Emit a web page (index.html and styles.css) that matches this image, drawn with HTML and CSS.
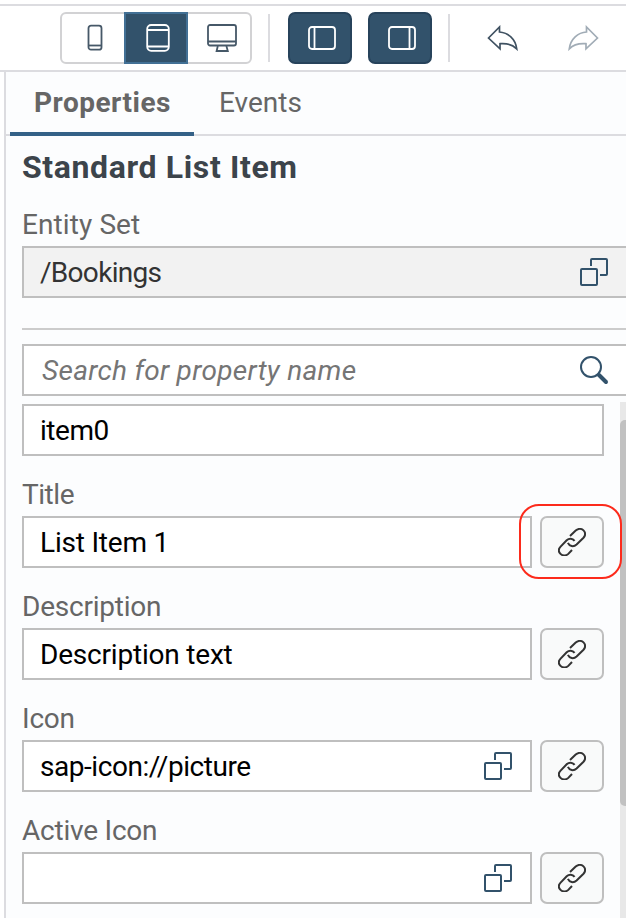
FILE: index.html
```html
<!DOCTYPE html>
<html lang="en">
<head>
<meta charset="utf-8">
<title>Properties</title>
<link rel="stylesheet" href="styles.css">
</head>
<body>
<svg width="0" height="0" class="defs">
  <symbol id="link" viewBox="0 0 28 28"><path d="M12 8 17.700 2.600C20 .4 23.300 .3 25.500 2.400S27.600 7.500 25.500 9.700L18.600 16.500C15.500 19.300 11.500 18.300 9.900 14.800M16.600 12.900C14.500 10 11 10 8.700 12.200L2.600 18.600C.4 20.900 .4 23.800 2.500 25.900S8.200 28 10.300 25.900L14 22"/></symbol>
  <symbol id="copy" viewBox="0 0 28 28"><path d="M11 8V2Q11 1 12 1H26Q27 1 27 2V16Q27 17 26 17H20"/><rect x="1" y="11" width="16" height="16" rx="1"/></symbol>
</svg>
<header class="toolbar">
  <div class="devices">
    <button class="device phone"><svg width="16" height="28"><rect x="1.500" y="1.700" width="13" height="24" rx="2.500"/><path d="M2 21.500H14"/></svg></button>
    <button class="device on"><svg width="24" height="28"><rect x="1.200" y="1" width="21.600" height="25.800" rx="4"/><path d="M1 6H23M1 22.500H23"/></svg></button>
    <button class="device desktop"><svg width="30" height="28"><rect x="1" y="1" width="28" height="20.500" rx="2"/><path d="M1 17.500H29M10.800 22 9.600 27H20.800L19.400 22"/></svg></button>
  </div>
  <i class="divider"></i>
  <button class="toggle"><svg width="28" height="24"><rect x="1" y="1" width="26" height="22" rx="3"/><path d="M6.500 1V23"/></svg></button>
  <button class="toggle"><svg width="28" height="24"><rect x="1" y="1" width="26" height="22" rx="3"/><path d="M21.500 1V23"/></svg></button>
  <i class="divider"></i>
  <button class="action"><svg width="32" height="26" viewBox="0 0 32 26"><path d="M1.500 13 12.500 2V7C21 7.500 28.500 14 29.700 23.800 25 19 19 18.200 13 18.700V23.800Z"/></svg></button>
  <button class="action muted"><svg width="32" height="26" viewBox="0 0 32 26"><path d="M30.500 13 19.500 2V7C11 7.500 3.500 14 2.300 23.800 7 19 13 18.200 19 18.700V23.800Z"/></svg></button>
</header>
<main class="panel">
  <nav class="tabs"><a class="tab active"><span>Properties</span></a><a class="tab"><span>Events</span></a></nav>
  <h1><span>Standard List Item</span></h1>
  <section class="entity">
    <label class="first"><span>Entity Set</span></label>
    <div class="field readonly wide"><span>/Bookings</span><svg class="copy" width="28" height="28"><use href="#copy"/></svg></div>
  </section>
  <div class="field search wide"><span>Search for property name</span><svg width="30" height="30"><circle cx="12" cy="12" r="10"/><path class="handle" d="M20 20 27 27"/></svg></div>
  <div class="list">
    <div class="props">
      <div class="field tight"><span>item0</span></div>
      <label class="tight"><span>Title</span></label>
      <div class="row"><div class="field"><span>List Item 1</span></div><button class="bind ring"><svg width="28" height="28"><use href="#link"/></svg></button></div>
      <label><span>Description</span></label>
      <div class="row"><div class="field"><span>Description text</span></div><button class="bind"><svg width="28" height="28"><use href="#link"/></svg></button></div>
      <label><span>Icon</span></label>
      <div class="row"><div class="field tight"><span>sap-icon://picture</span><svg class="copy" width="28" height="28"><use href="#copy"/></svg></div><button class="bind"><svg width="28" height="28"><use href="#link"/></svg></button></div>
      <label><span>Active Icon</span></label>
      <div class="row"><div class="field"><span></span><svg class="copy" width="28" height="28"><use href="#copy"/></svg></div><button class="bind"><svg width="28" height="28"><use href="#link"/></svg></button></div>
    </div>
    <div class="track"><div class="thumb"></div></div>
  </div>
</main>
</body>
</html>
```
FILE: styles.css
```css
* { box-sizing: border-box; }
body { margin: 0; width: 626px; height: 918px; overflow: hidden; background: #fff; font: 28px/33px Roboto, "Liberation Sans", sans-serif; color: #000; }
svg { display: block; flex: none; fill: none; stroke: currentColor; stroke-width: 2; }
.defs { position: absolute; }
button { padding: 0; margin: 0; font: inherit; background: none; border: 0; display: flex; align-items: center; justify-content: center; flex: none; }
.toolbar { height: 68px; margin-top: 4px; border: solid #dcdce0; border-width: 2px 0; display: flex; align-items: center; padding-left: 60px; color: #3f5161; }
.devices { display: flex; width: 192px; height: 52px; border: 2px solid #d2d2d4; border-radius: 6px; }
.device { flex: 1; height: 48px; color: #465868; }
.device svg { stroke-width: 1.8; }
.phone svg { margin-left: 4px; }
.desktop svg { margin-left: 6px; }
.device.on { flex: none; width: 64px; height: 52px; margin-top: -2px; background: #32526b; border: 2px solid #427095; color: #fff; }
.device.on svg { margin-left: 4px; }
.divider { width: 2px; height: 48px; margin: 0 16px; background: #dcdce0; }
.toggle { width: 64px; height: 52px; border: 2px solid #27435b; border-radius: 7px; background: #32526b; color: #fff; }
.toggle svg { margin-left: 4px; stroke-width: 1.8; }
.toggle + .toggle { margin-left: 16px; }
.divider + .toggle { margin-left: 2px; }
.action { width: 32px; height: 32px; margin-left: 21px; color: #3f5161; }
.action svg { stroke-width: 1.7; }
.action.muted { margin-left: 48px; color: #a1acb6; }
.panel { margin-left: 4px; height: 846px; border-left: 2px solid #dcdce0; background: #fcfdfe; }
.tabs { display: flex; height: 64px; border-bottom: 2px solid #dcdce0; padding-left: 4px; }
.tab { height: 64px; padding: 11px 25px 0; line-height: 40px; color: #666; }
.tab.active { width: 184px; padding: 11px 0 0 24px; font-weight: 700; letter-spacing: .5px; border-bottom: 4px solid #346187; }
h1 { margin: 11px 0 21px 16px; font-size: 32px; line-height: 40px; letter-spacing: .63px; color: #3c444b; white-space: nowrap; }
.entity { margin-left: 16px; padding-bottom: 30px; border-bottom: 2px solid #ccc; margin-bottom: 14px; }
label { display: block; height: 60px; padding-top: 22px; color: #666; letter-spacing: -.22px; }
label.first { height: 38px; padding-top: 0; letter-spacing: .1px; }
.field { flex: 1; height: 52px; padding: 0 18px 0 16px; border: 2px solid #bfbfbf; background: #fff; display: flex; align-items: center; justify-content: space-between; line-height: 48px; letter-spacing: -.2px; white-space: nowrap; }
.field span { padding-top: 2px; line-height: 46px; }
.tight { letter-spacing: -.45px; }
.wide { border-right: 0; }
.readonly { background: #f2f2f2; color: #333; letter-spacing: -.7px; }
.copy, .search svg { color: #32526b; }
.search { margin-left: 16px; padding-left: 18px; color: #757575; font-style: italic; letter-spacing: .3px; }
.search svg { margin-right: -1px; }
.handle { stroke-width: 4; stroke-linecap: round; }
.list { display: flex; justify-content: space-between; margin: 6px 0 0 16px; height: 516px; }
.props { width: 582px; padding-top: 2px; }
.row { display: flex; gap: 8px; }
.bind { position: relative; width: 64px; height: 52px; border: 2px solid #bfbfbf; border-radius: 7px; background: #f9fafa; color: #333; }
.bind svg { overflow: visible; }
.ring::after { content: ""; box-sizing: border-box; position: absolute; left: -23px; top: -14px; width: 103px; height: 75px; border: 2px solid #fc2b1c; border-radius: 20px; z-index: 1; }
.track { width: 6px; padding-top: 18px; background: #e8e8e8; }
.thumb { height: 386px; background: #c1c1c1; border-radius: 5px 0 0 5px; }
```
